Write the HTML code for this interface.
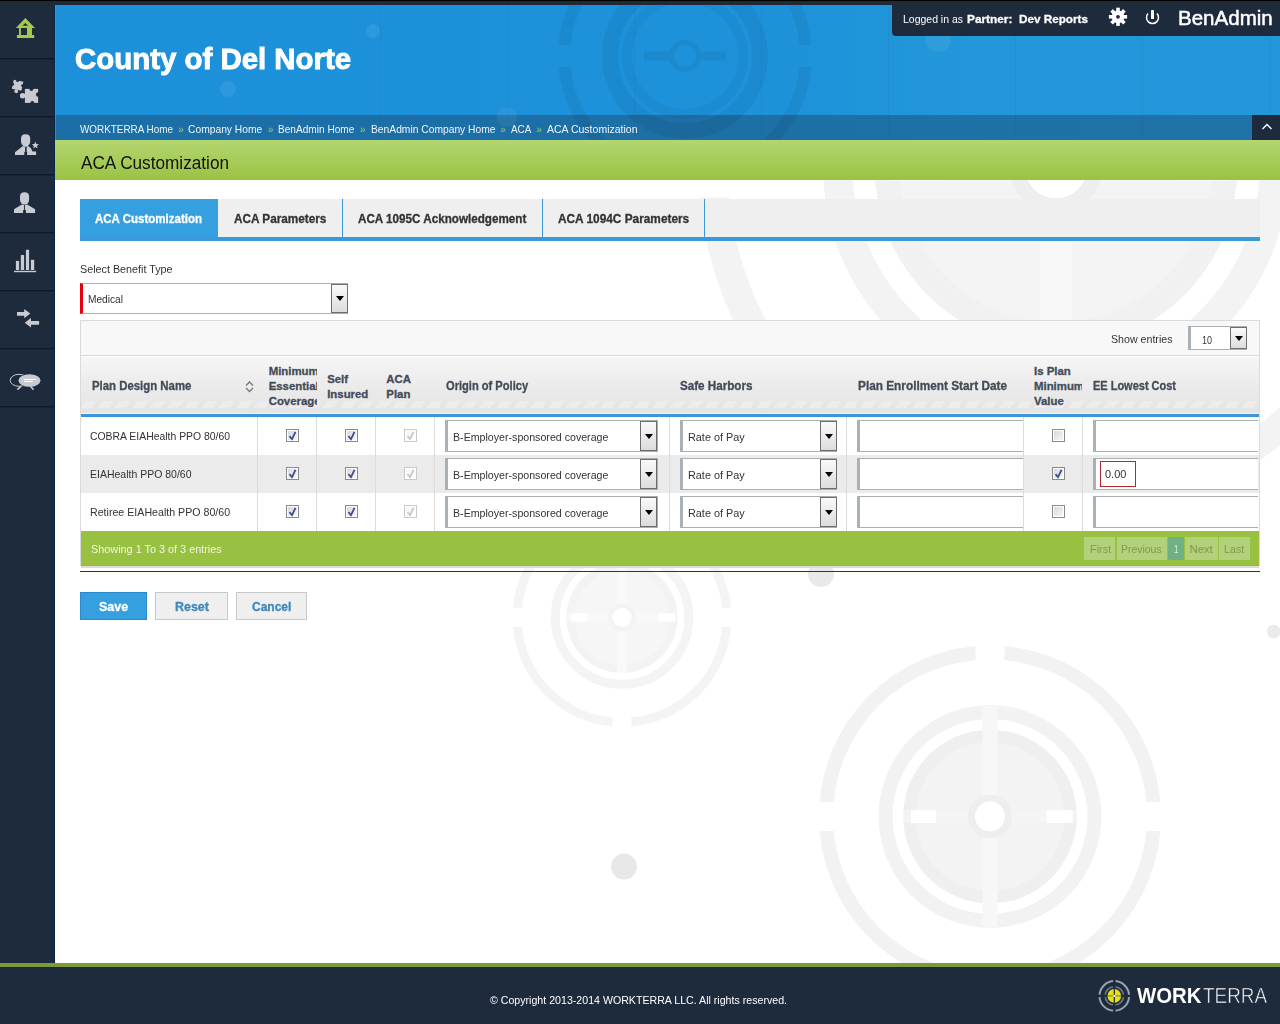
<!DOCTYPE html><html><head><meta charset="utf-8"><style>
*{margin:0;padding:0;box-sizing:border-box}
html,body{width:1280px;height:1024px;overflow:hidden;background:#fff;font-family:"Liberation Sans",sans-serif;color:#333;position:relative}
.a{position:absolute}
.t{position:absolute;white-space:pre;transform-origin:0 0}
</style></head><body><svg class="a" width="1280" height="1024" style="left:0;top:0"><defs><mask id="gapmask" maskUnits="userSpaceOnUse" x="-200" y="-200" width="400" height="400"><rect x="-200" y="-200" width="400" height="400" fill="#fff"/><rect x="-14.5" y="-200" width="29" height="400" fill="#000"/><rect x="-200" y="-14.5" width="400" height="29" fill="#000"/></mask></defs><g transform="translate(1056 167) scale(2.09)"><circle r="164" fill="none" stroke="#f3f3f3" stroke-width="14" mask="url(#gapmask)"/><circle r="104.4" fill="none" stroke="#f3f3f3" stroke-width="14"/><circle r="86.8" fill="#f1f1f1"/><circle r="74.5" fill="#f4f4f4"/><rect x="-7.5" y="-111.4" width="15" height="222.8" fill="#f8f8f8"/><rect x="-86.8" y="-6.5" width="173.6" height="13" fill="#f8f8f8" opacity="0.5"/><circle r="22" fill="#eeeeee"/><circle r="15" fill="#fff"/><rect x="-79" y="-6.5" width="25" height="13" fill="#fff"/><rect x="56.6" y="-6.5" width="26" height="13" fill="#fff"/></g><g transform="translate(622 617.5) scale(0.64)"><circle r="164" fill="none" stroke="#f4f4f4" stroke-width="14" mask="url(#gapmask)"/><circle r="104.4" fill="none" stroke="#f4f4f4" stroke-width="14"/><circle r="86.8" fill="#f3f3f3"/><circle r="74.5" fill="#f6f6f6"/><rect x="-7.5" y="-86.8" width="15" height="173.6" fill="#f9f9f9"/><rect x="-86.8" y="-6.5" width="173.6" height="13" fill="#f9f9f9" opacity="0.5"/><circle r="22" fill="#f3f3f3"/><circle r="15" fill="#fff"/><rect x="-79" y="-6.5" width="25" height="13" fill="#fff"/><rect x="56.6" y="-6.5" width="26" height="13" fill="#fff"/></g><g transform="translate(990 816.5) scale(1.0)"><circle r="164" fill="none" stroke="#f2f2f2" stroke-width="14" mask="url(#gapmask)"/><circle r="104.4" fill="none" stroke="#f2f2f2" stroke-width="14"/><circle r="86.8" fill="#efefef"/><circle r="74.5" fill="#f3f3f3"/><rect x="-7.5" y="-111.4" width="15" height="222.8" fill="#f7f7f7"/><rect x="-86.8" y="-6.5" width="173.6" height="13" fill="#f7f7f7" opacity="0.5"/><circle r="22" fill="#eeeeee"/><circle r="15" fill="#fff"/><rect x="-79" y="-6.5" width="25" height="13" fill="#fff"/><rect x="56.6" y="-6.5" width="26" height="13" fill="#fff"/></g><circle cx="821" cy="574" r="13" fill="#e9e9e9"/><circle cx="624" cy="866.6" r="13" fill="#e8e8e8"/><circle cx="1273.6" cy="631.6" r="6.8" fill="#ebebeb"/></svg><div class="a" style="left:0;top:0;width:1280px;height:5px;background:#1f2a37;border-top:1px solid #000"></div><div class="a" style="left:0;top:5px;width:55px;height:958px;background:#1e2b3d;border-right:1px solid #06284a"></div><div class="a" style="left:0;top:58px;width:54px;height:1px;background:#0d1a2a"></div><div class="a" style="left:0;top:59px;width:54px;height:1px;background:#16222f"></div><div class="a" style="left:0;top:116px;width:54px;height:1px;background:#0d1a2a"></div><div class="a" style="left:0;top:117px;width:54px;height:1px;background:#16222f"></div><div class="a" style="left:0;top:174px;width:54px;height:1px;background:#0d1a2a"></div><div class="a" style="left:0;top:175px;width:54px;height:1px;background:#16222f"></div><div class="a" style="left:0;top:232px;width:54px;height:1px;background:#0d1a2a"></div><div class="a" style="left:0;top:233px;width:54px;height:1px;background:#16222f"></div><div class="a" style="left:0;top:290px;width:54px;height:1px;background:#0d1a2a"></div><div class="a" style="left:0;top:291px;width:54px;height:1px;background:#16222f"></div><div class="a" style="left:0;top:348px;width:54px;height:1px;background:#0d1a2a"></div><div class="a" style="left:0;top:349px;width:54px;height:1px;background:#16222f"></div><div class="a" style="left:0;top:406px;width:54px;height:1px;background:#0d1a2a"></div><div class="a" style="left:0;top:407px;width:54px;height:1px;background:#16222f"></div><svg class="a" width="55" height="400" style="left:0;top:0"><path d="M15.9 27.9 L25.3 17.9 L35 27.9 Z M22.5 25.75 L25.3 22.9 L28.1 25.75 Z" fill="#a3ca4a" fill-rule="evenodd"/><rect x="19" y="27.9" width="1.9" height="7.2" fill="#a3ca4a"/><rect x="27" y="27.9" width="5" height="7.2" fill="#a3ca4a"/><rect x="16.9" y="35" width="17.3" height="3" fill="#a3ca4a"/><g fill="#c8ccd2"><rect x="24.9" y="88.9" width="13.2" height="14"/><circle cx="22.6" cy="95.7" r="2.7"/></g><g fill="#1e2b3d"><circle cx="31.4" cy="88.9" r="2"/><circle cx="38.1" cy="94.5" r="2.2"/><circle cx="32.3" cy="102.9" r="2"/></g><g transform="translate(17.6 85.2) rotate(-78) scale(0.7)"><g fill="#c8ccd2"><rect x="-6.6" y="-7" width="13.2" height="14"/><circle cx="-8.9" cy="-0.2" r="2.7"/></g><g fill="#1e2b3d"><circle cx="-0.1" cy="-7" r="2"/><circle cx="6.6" cy="-1.4" r="2.2"/><circle cx="0.8" cy="7" r="2"/></g></g><g fill="#c8ccd2"><path d="M21 138.5 Q21 134.2 25.6 134.2 Q30.2 134.2 30.2 138.5 L30.2 141.5 Q30.2 144.8 27.8 146 L23.4 146 Q21 144.8 21 141.5 Z"/><path d="M22.5 146.3 L28.6 146.3 L31 148.3 L32.5 151.5 L36.1 151.5 L36.1 155.1 L15 155.1 L15 152.3 Z"/><path d="M35.4 141.6 L36.4 144 L39 144.2 L37 145.9 L37.6 148.5 L35.4 147.1 L33.2 148.5 L33.8 145.9 L31.8 144.2 L34.4 144 Z"/></g><path d="M25.1 147 L26.7 147 L26.7 152 L27.1 152 L27.1 155.2 L24.3 155.2 L24.3 152 L25.1 152 Z" fill="#1e2b3d"/><g fill="#c8ccd2"><path d="M20 196.5 Q20 192.2 24.55 192.2 Q29.1 192.2 29.1 196.5 L29.1 199.5 Q29.1 202.8 27.2 204 L21.9 204 Q20 202.8 20 199.5 Z"/><path d="M21.9 204.6 L27.2 204.6 L35.1 209.3 L35.1 213.1 L14 213.1 L14 209.3 Z"/></g><path d="M24 205 L24.9 205 L24.9 210.1 L25.9 210.1 L25.9 213.2 L23.1 213.2 L23.1 210.1 L24 210.1 Z" fill="#1e2b3d"/><g fill="#c8ccd2"><rect x="15.9" y="260.9" width="3.2" height="9.1"/><rect x="20.8" y="255" width="3.3" height="15"/><rect x="25.9" y="249.8" width="3.2" height="20.2"/><rect x="30.9" y="259.8" width="3.3" height="10.2"/><rect x="14" y="270.8" width="22.1" height="1.4"/></g><g fill="#c8ccd2"><path d="M17 312 L24.2 312 L24.2 309 L30.3 313.6 L24.2 318.3 L24.2 315.8 L17 315.8 Z"/><path d="M39.1 320.9 L31 320.9 L31 317.9 L24.7 322.7 L31 327.4 L31 324.8 L39.1 324.8 Z"/></g><ellipse cx="19" cy="380.3" rx="8.8" ry="6" fill="none" stroke="#c8ccd2" stroke-width="1"/><path d="M21 386.4 L17.3 389.6" fill="none" stroke="#c8ccd2" stroke-width="1.6"/><ellipse cx="29.5" cy="380.5" rx="11.5" ry="6.5" fill="#1e2b3d"/><ellipse cx="29.5" cy="380.5" rx="11" ry="6.3" fill="#c8ccd2"/><path d="M30.3 386.3 L33.6 389.6" fill="none" stroke="#c8ccd2" stroke-width="1.6"/><rect x="24" y="379" width="11.8" height="1" fill="#fff"/><rect x="24" y="381" width="8.8" height="1" fill="#fff"/></svg><div class="a" style="left:55px;top:5px;width:1225px;height:110px;background:linear-gradient(90deg,#1c90d9 0%,#1d91d9 55%,#2397da 75%,#2397da 100%)"></div><div class="a" style="left:55px;top:115px;width:1225px;height:25px;background:linear-gradient(90deg,#1c6fa6 0%,#1d70a6 55%,#2073a8 100%)"></div><div class="a" style="left:55px;top:5px;width:1px;height:135px;background:#3f9fdc;opacity:.6"></div><div class="a" style="left:380px;top:5px;width:1px;height:135px;background:#000;opacity:.035"></div><div class="a" style="left:507px;top:5px;width:1px;height:135px;background:#000;opacity:.035"></div><div class="a" style="left:634px;top:5px;width:1px;height:135px;background:#000;opacity:.035"></div><div class="a" style="left:761px;top:5px;width:1px;height:135px;background:#000;opacity:.035"></div><div class="a" style="left:888px;top:5px;width:1px;height:135px;background:#000;opacity:.035"></div><div class="a" style="left:1015px;top:5px;width:1px;height:135px;background:#000;opacity:.035"></div><div class="a" style="left:1142px;top:5px;width:1px;height:135px;background:#000;opacity:.035"></div><div class="a" style="left:1269px;top:5px;width:1px;height:135px;background:#000;opacity:.035"></div><div class="a" style="left:55px;top:140px;width:1225px;height:40px;background:linear-gradient(#b3d670,#9bc243)"></div><svg class="a" width="1225" height="135" style="left:55px;top:5px"><g transform="translate(630 51)" fill="none" stroke="#000" stroke-opacity="0.055"><circle r="121" stroke-width="12" mask="url(#hgap)"/><circle r="75" stroke-width="16"/><circle r="58" stroke-width="10" stroke-opacity="0.03"/><circle r="13.5" stroke-width="5"/></g><g transform="translate(630 51)" fill="#000" fill-opacity="0.055"><rect x="-41" y="-4.5" width="25" height="9"/><rect x="16" y="-4.5" width="25" height="9"/></g><defs><mask id="hgap" maskUnits="userSpaceOnUse" x="-150" y="-150" width="300" height="300"><rect x="-150" y="-150" width="300" height="300" fill="#fff"/><rect x="-11" y="-150" width="22" height="300" fill="#000"/><rect x="-150" y="-11" width="300" height="22" fill="#000"/></mask></defs><circle cx="173" cy="84" r="8" fill="#fff" fill-opacity="0.08"/><circle cx="318" cy="26" r="7" fill="#fff" fill-opacity="0.08"/><circle cx="452" cy="112" r="10" fill="#fff" fill-opacity="0.06"/><circle cx="883" cy="34" r="13" fill="#fff" fill-opacity="0.06"/></svg><div class="t" style="left:75.40px;top:45.35px;font-size:29px;line-height:29px;color:#fff;font-weight:bold;transform:scaleX(1.0144);-webkit-text-stroke:0.9px #fff;">County of Del Norte</div><div class="a" style="left:892px;top:5px;width:388px;height:30.6px;background:#1e2b3d;border-bottom-left-radius:4px"></div><div class="t" style="left:903.30px;top:13.57px;font-size:11.8px;line-height:11.8px;color:#fff;transform:scaleX(0.8881);">Logged in as</div><div class="t" style="left:967.30px;top:13.57px;font-size:11.8px;line-height:11.8px;color:#fff;font-weight:bold;-webkit-text-stroke:0.3px #fff;transform:scaleX(1.0033);">Partner:</div><div class="t" style="left:1019.40px;top:13.57px;font-size:11.8px;line-height:11.8px;color:#fff;font-weight:bold;-webkit-text-stroke:0.3px #fff;transform:scaleX(0.9928);">Dev Reports</div><svg class="a" width="1280" height="40" style="left:0;top:0"><g transform="translate(1118 16.8)" fill="#fff"><rect x="-1.8" y="-9.1" width="3.6" height="5" transform="rotate(0)"/><rect x="-1.8" y="-9.1" width="3.6" height="5" transform="rotate(45)"/><rect x="-1.8" y="-9.1" width="3.6" height="5" transform="rotate(90)"/><rect x="-1.8" y="-9.1" width="3.6" height="5" transform="rotate(135)"/><rect x="-1.8" y="-9.1" width="3.6" height="5" transform="rotate(180)"/><rect x="-1.8" y="-9.1" width="3.6" height="5" transform="rotate(225)"/><rect x="-1.8" y="-9.1" width="3.6" height="5" transform="rotate(270)"/><rect x="-1.8" y="-9.1" width="3.6" height="5" transform="rotate(315)"/><circle r="6.4"/></g><circle cx="1118" cy="16.8" r="1.9" fill="#1e2b3d"/><path d="M1148 13.6 A6 6 0 1 0 1157 13.6" fill="none" stroke="#fff" stroke-width="1.5"/><rect x="1151" y="10" width="3" height="9" rx="0.8" fill="#fff"/></svg><div class="t" style="left:1177.60px;top:7.15px;font-size:21px;line-height:21px;color:#fff;transform:scaleX(0.9774);-webkit-text-stroke:0.5px #fff;">BenAdmin</div><div class="t" style="left:80.00px;top:123.99px;font-size:11.3px;line-height:11.3px;color:#eef5fb;transform:scaleX(0.8766);">WORKTERRA Home</div><div class="t" style="left:177.90px;top:124.80px;font-size:10px;line-height:10px;color:#93cc5a;">»</div><div class="t" style="left:188.40px;top:123.99px;font-size:11.3px;line-height:11.3px;color:#eef5fb;transform:scaleX(0.9103);">Company Home</div><div class="t" style="left:267.75px;top:124.80px;font-size:10px;line-height:10px;color:#93cc5a;">»</div><div class="t" style="left:278.40px;top:123.99px;font-size:11.3px;line-height:11.3px;color:#eef5fb;transform:scaleX(0.8945);">BenAdmin Home</div><div class="t" style="left:359.85px;top:124.80px;font-size:10px;line-height:10px;color:#93cc5a;">»</div><div class="t" style="left:370.50px;top:123.99px;font-size:11.3px;line-height:11.3px;color:#eef5fb;transform:scaleX(0.9095);">BenAdmin Company Home</div><div class="t" style="left:500.07px;top:124.80px;font-size:10px;line-height:10px;color:#93cc5a;">»</div><div class="t" style="left:510.75px;top:123.99px;font-size:11.3px;line-height:11.3px;color:#eef5fb;transform:scaleX(0.8716);">ACA</div><div class="t" style="left:536.20px;top:124.80px;font-size:10px;line-height:10px;color:#93cc5a;">»</div><div class="t" style="left:547.00px;top:123.99px;font-size:11.3px;line-height:11.3px;color:#eef5fb;transform:scaleX(0.9298);">ACA Customization</div><div class="a" style="left:1252px;top:115px;width:28px;height:25px;background:#1e2b3d"></div><svg class="a" width="28" height="25" style="left:1252px;top:115px"><path d="M10.5 14 L15 9.6 L19.5 14" fill="none" stroke="#fff" stroke-width="1.4"/></svg><div class="t" style="left:80.60px;top:154.53px;font-size:17.5px;line-height:17.5px;color:#111;transform:scaleX(0.9817);">ACA Customization</div><div class="a" style="left:80px;top:199px;width:1180px;height:38px;background:#efefef"></div><div class="a" style="left:80px;top:199px;width:138px;height:38px;background:#359fe0"></div><div class="a" style="left:342px;top:199px;width:1px;height:38px;background:#3b9ad6"></div><div class="a" style="left:542px;top:199px;width:1px;height:38px;background:#3b9ad6"></div><div class="a" style="left:704px;top:199px;width:1px;height:38px;background:#3b9ad6"></div><div class="a" style="left:80px;top:237px;width:1180px;height:4px;background:#3b9ad6"></div><div class="t" style="left:95.00px;top:212.80px;font-size:12px;line-height:12px;color:#fff;font-weight:bold;-webkit-text-stroke:0.3px #fff;transform:scaleX(0.9591);">ACA Customization</div><div class="t" style="left:234.40px;top:212.80px;font-size:12px;line-height:12px;color:#333;font-weight:bold;-webkit-text-stroke:0.3px #333;transform:scaleX(0.9802);">ACA Parameters</div><div class="t" style="left:358.30px;top:212.80px;font-size:12px;line-height:12px;color:#333;font-weight:bold;-webkit-text-stroke:0.3px #333;transform:scaleX(0.9720);">ACA 1095C Acknowledgement</div><div class="t" style="left:557.80px;top:212.80px;font-size:12px;line-height:12px;color:#333;font-weight:bold;-webkit-text-stroke:0.3px #333;transform:scaleX(0.9867);">ACA 1094C Parameters</div><div class="t" style="left:79.50px;top:263.06px;font-size:11.7px;line-height:11.7px;color:#333;transform:scaleX(0.9204);">Select Benefit Type</div><div class="a" style="left:80px;top:283px;width:268px;height:31px;background:#fff;border:1px solid #a8b0b5;border-left:3px solid #e4000f"></div><div class="a" style="left:331px;top:284px;width:17px;height:29px;border:1px solid #6d6d6d;background:linear-gradient(#fafafa,#dcdcdc)"><div class="a" style="left:3.5px;top:11.0px;width:0;height:0;border-left:4px solid transparent;border-right:4px solid transparent;border-top:5px solid #000"></div></div><div class="t" style="left:87.70px;top:293.93px;font-size:11.5px;line-height:11.5px;color:#333;transform:scaleX(0.8829);">Medical</div><div class="a" style="left:80px;top:320px;width:1180px;height:246px;border:1px solid #dadada;background:#fff"></div><div class="a" style="left:81px;top:321px;width:1178px;height:35px;background:#f8f8f8;border-bottom:1px solid #d6d6d6"></div><div class="t" style="left:1110.60px;top:333.69px;font-size:11.3px;line-height:11.3px;color:#333;transform:scaleX(0.9416);">Show entries</div><div class="a" style="left:1188px;top:326px;width:59px;height:24px;background:#fff;border:1px solid #a8b0b5;border-left:3px solid #a8b1b8"></div><div class="a" style="left:1230px;top:327px;width:17px;height:22px;border:1px solid #6d6d6d;background:linear-gradient(#fafafa,#dcdcdc)"><div class="a" style="left:3.5px;top:7.5px;width:0;height:0;border-left:4px solid transparent;border-right:4px solid transparent;border-top:5px solid #000"></div></div><div class="t" style="left:1202.00px;top:334.85px;font-size:11px;line-height:11px;color:#333;transform:scaleX(0.8163);">10</div><div class="a" style="left:81px;top:357px;width:1178px;height:57px;background:linear-gradient(#f6f6f6 0%,#ececec 45%,#e4e4e4 100%)"></div><div class="a" style="left:81px;top:401px;width:1178px;height:7px;opacity:.6;filter:blur(0.4px);background:repeating-linear-gradient(-55deg,transparent 0 5px,#f2f2f2 5px 14.2px)"></div><div class="a" style="left:81px;top:413px;width:1178px;height:1px;background:#eef6fc"></div><div class="a" style="left:81px;top:414px;width:1178px;height:3px;background:#3b95d6"></div><div class="t" style="left:91.50px;top:379.80px;font-size:12px;line-height:12px;color:#434b58;font-weight:bold;-webkit-text-stroke:0.3px #434b58;transform:scaleX(0.9494);">Plan Design Name</div><svg class="a" width="10" height="12" style="left:245px;top:380.7px"><path d="M1 4.5 L4.5 1 L8 4.5 M1 7 L4.5 10.5 L8 7" fill="none" stroke="#777" stroke-width="1.3"/></svg><div class="t" style="left:268.70px;top:365.91px;font-size:11.399999999999999px;line-height:11.399999999999999px;color:#434b58;font-weight:bold;-webkit-text-stroke:0.3px #434b58;"><div style="width:48.5px;overflow:hidden">Minimum</div></div><div class="t" style="left:268.70px;top:380.61px;font-size:11.399999999999999px;line-height:11.399999999999999px;color:#434b58;font-weight:bold;-webkit-text-stroke:0.3px #434b58;"><div style="width:48.5px;overflow:hidden">Essential</div></div><div class="t" style="left:268.70px;top:395.81px;font-size:11.399999999999999px;line-height:11.399999999999999px;color:#434b58;font-weight:bold;-webkit-text-stroke:0.3px #434b58;"><div style="width:48.5px;overflow:hidden">Coverage</div></div><div class="t" style="left:327.20px;top:373.61px;font-size:11.399999999999999px;line-height:11.399999999999999px;color:#434b58;font-weight:bold;-webkit-text-stroke:0.3px #434b58;">Self</div><div class="t" style="left:327.20px;top:388.81px;font-size:11.399999999999999px;line-height:11.399999999999999px;color:#434b58;font-weight:bold;-webkit-text-stroke:0.3px #434b58;">Insured</div><div class="t" style="left:386.30px;top:373.61px;font-size:11.399999999999999px;line-height:11.399999999999999px;color:#434b58;font-weight:bold;-webkit-text-stroke:0.3px #434b58;">ACA</div><div class="t" style="left:386.30px;top:388.81px;font-size:11.399999999999999px;line-height:11.399999999999999px;color:#434b58;font-weight:bold;-webkit-text-stroke:0.3px #434b58;">Plan</div><div class="t" style="left:445.50px;top:379.50px;font-size:12px;line-height:12px;color:#434b58;font-weight:bold;-webkit-text-stroke:0.3px #434b58;transform:scaleX(0.9257);">Origin of Policy</div><div class="t" style="left:680.30px;top:379.50px;font-size:12px;line-height:12px;color:#434b58;font-weight:bold;-webkit-text-stroke:0.3px #434b58;transform:scaleX(0.9705);">Safe Harbors</div><div class="t" style="left:857.50px;top:379.80px;font-size:12px;line-height:12px;color:#434b58;font-weight:bold;-webkit-text-stroke:0.3px #434b58;transform:scaleX(0.9843);">Plan Enrollment Start Date</div><div class="t" style="left:1034.00px;top:366.11px;font-size:11.399999999999999px;line-height:11.399999999999999px;color:#434b58;font-weight:bold;-webkit-text-stroke:0.3px #434b58;"><div style="width:48.0px;overflow:hidden">Is Plan</div></div><div class="t" style="left:1034.00px;top:381.11px;font-size:11.399999999999999px;line-height:11.399999999999999px;color:#434b58;font-weight:bold;-webkit-text-stroke:0.3px #434b58;"><div style="width:48.0px;overflow:hidden">Minimum</div></div><div class="t" style="left:1034.00px;top:396.11px;font-size:11.399999999999999px;line-height:11.399999999999999px;color:#434b58;font-weight:bold;-webkit-text-stroke:0.3px #434b58;"><div style="width:48.0px;overflow:hidden">Value</div></div><div class="t" style="left:1093.00px;top:379.80px;font-size:12px;line-height:12px;color:#434b58;font-weight:bold;-webkit-text-stroke:0.3px #434b58;transform:scaleX(0.9152);">EE Lowest Cost</div><div class="a" style="left:81px;top:455px;width:1178px;height:38px;background:#ebebeb"></div><div class="a" style="left:257px;top:417px;width:1px;height:114px;background:#dcdcdc"></div><div class="a" style="left:316px;top:417px;width:1px;height:114px;background:#dcdcdc"></div><div class="a" style="left:375px;top:417px;width:1px;height:114px;background:#dcdcdc"></div><div class="a" style="left:434px;top:417px;width:1px;height:114px;background:#dcdcdc"></div><div class="a" style="left:669px;top:417px;width:1px;height:114px;background:#dcdcdc"></div><div class="a" style="left:846px;top:417px;width:1px;height:114px;background:#dcdcdc"></div><div class="a" style="left:1023px;top:417px;width:1px;height:114px;background:#dcdcdc"></div><div class="a" style="left:1082px;top:417px;width:1px;height:114px;background:#dcdcdc"></div><div class="t" style="left:90.20px;top:431.00px;font-size:11.3px;line-height:11.3px;color:#333;transform:scaleX(0.9219);">COBRA EIAHealth PPO 80/60</div><div class="a" style="left:286px;top:429px;width:13px;height:13px;border:1px solid #8a8a8a;background:linear-gradient(135deg,#d4d6dc,#fafafa);box-shadow:inset 0 0 0 1px #fff"></div><svg class="a" width="13" height="13" style="left:286px;top:429px"><path d="M3.5 7.2 L6 10.1 L9.5 2.8" fill="none" stroke="#3f4d8c" stroke-width="1.8"/></svg><div class="a" style="left:345px;top:429px;width:13px;height:13px;border:1px solid #8a8a8a;background:linear-gradient(135deg,#d4d6dc,#fafafa);box-shadow:inset 0 0 0 1px #fff"></div><svg class="a" width="13" height="13" style="left:345px;top:429px"><path d="M3.5 7.2 L6 10.1 L9.5 2.8" fill="none" stroke="#3f4d8c" stroke-width="1.8"/></svg><div class="a" style="left:404px;top:429px;width:13px;height:13px;border:1px solid #c9c9c9;background:linear-gradient(135deg,#f4f4f4,#ffffff);box-shadow:inset 0 0 0 1px #fff"></div><svg class="a" width="13" height="13" style="left:404px;top:429px"><path d="M3.5 7.2 L6 10.1 L9.5 2.8" fill="none" stroke="#c8c8c8" stroke-width="1.8"/></svg><div class="a" style="left:445px;top:420px;width:213px;height:32px;background:#fff;border:1px solid #a8b0b5;border-left:3px solid #a8b1b8"></div><div class="a" style="left:640px;top:421px;width:17px;height:30px;border:1px solid #6d6d6d;background:linear-gradient(#fafafa,#dcdcdc)"><div class="a" style="left:3.5px;top:11.5px;width:0;height:0;border-left:4px solid transparent;border-right:4px solid transparent;border-top:5px solid #000"></div></div><div class="t" style="left:452.50px;top:431.65px;font-size:11px;line-height:11px;color:#333;transform:scaleX(0.9663);">B-Employer-sponsored coverage</div><div class="a" style="left:680px;top:420px;width:157px;height:32px;background:#fff;border:1px solid #a8b0b5;border-left:3px solid #a8b1b8"></div><div class="a" style="left:820px;top:421px;width:17px;height:30px;border:1px solid #6d6d6d;background:linear-gradient(#fafafa,#dcdcdc)"><div class="a" style="left:3.5px;top:11.5px;width:0;height:0;border-left:4px solid transparent;border-right:4px solid transparent;border-top:5px solid #000"></div></div><div class="t" style="left:687.50px;top:431.65px;font-size:11px;line-height:11px;color:#333;transform:scaleX(0.9864);">Rate of Pay</div><div class="a" style="left:857px;top:420px;width:166px;height:32px;background:#fff;border:1px solid #a8b0b5;border-right:none;border-left:3px solid #a8b1b8"></div><div class="a" style="left:1052px;top:429px;width:13px;height:13px;border:1px solid #8a8a8a;background:linear-gradient(135deg,#d4d6dc,#fafafa);box-shadow:inset 0 0 0 1px #fff"></div><div class="a" style="left:1093px;top:420px;width:165px;height:32px;background:#fff;border:1px solid #a8b0b5;border-right:none;border-left:3px solid #a8b1b8"></div><div class="t" style="left:90.20px;top:469.00px;font-size:11.3px;line-height:11.3px;color:#333;transform:scaleX(0.9288);">EIAHealth PPO 80/60</div><div class="a" style="left:286px;top:467px;width:13px;height:13px;border:1px solid #8a8a8a;background:linear-gradient(135deg,#d4d6dc,#fafafa);box-shadow:inset 0 0 0 1px #fff"></div><svg class="a" width="13" height="13" style="left:286px;top:467px"><path d="M3.5 7.2 L6 10.1 L9.5 2.8" fill="none" stroke="#3f4d8c" stroke-width="1.8"/></svg><div class="a" style="left:345px;top:467px;width:13px;height:13px;border:1px solid #8a8a8a;background:linear-gradient(135deg,#d4d6dc,#fafafa);box-shadow:inset 0 0 0 1px #fff"></div><svg class="a" width="13" height="13" style="left:345px;top:467px"><path d="M3.5 7.2 L6 10.1 L9.5 2.8" fill="none" stroke="#3f4d8c" stroke-width="1.8"/></svg><div class="a" style="left:404px;top:467px;width:13px;height:13px;border:1px solid #c9c9c9;background:linear-gradient(135deg,#f4f4f4,#ffffff);box-shadow:inset 0 0 0 1px #fff"></div><svg class="a" width="13" height="13" style="left:404px;top:467px"><path d="M3.5 7.2 L6 10.1 L9.5 2.8" fill="none" stroke="#c8c8c8" stroke-width="1.8"/></svg><div class="a" style="left:445px;top:458px;width:213px;height:32px;background:#fff;border:1px solid #a8b0b5;border-left:3px solid #a8b1b8"></div><div class="a" style="left:640px;top:459px;width:17px;height:30px;border:1px solid #6d6d6d;background:linear-gradient(#fafafa,#dcdcdc)"><div class="a" style="left:3.5px;top:11.5px;width:0;height:0;border-left:4px solid transparent;border-right:4px solid transparent;border-top:5px solid #000"></div></div><div class="t" style="left:452.50px;top:469.65px;font-size:11px;line-height:11px;color:#333;transform:scaleX(0.9663);">B-Employer-sponsored coverage</div><div class="a" style="left:680px;top:458px;width:157px;height:32px;background:#fff;border:1px solid #a8b0b5;border-left:3px solid #a8b1b8"></div><div class="a" style="left:820px;top:459px;width:17px;height:30px;border:1px solid #6d6d6d;background:linear-gradient(#fafafa,#dcdcdc)"><div class="a" style="left:3.5px;top:11.5px;width:0;height:0;border-left:4px solid transparent;border-right:4px solid transparent;border-top:5px solid #000"></div></div><div class="t" style="left:687.50px;top:469.65px;font-size:11px;line-height:11px;color:#333;transform:scaleX(0.9864);">Rate of Pay</div><div class="a" style="left:857px;top:458px;width:166px;height:32px;background:#fff;border:1px solid #a8b0b5;border-right:none;border-left:3px solid #a8b1b8"></div><div class="a" style="left:1052px;top:467px;width:13px;height:13px;border:1px solid #8a8a8a;background:linear-gradient(135deg,#d4d6dc,#fafafa);box-shadow:inset 0 0 0 1px #fff"></div><svg class="a" width="13" height="13" style="left:1052px;top:467px"><path d="M3.5 7.2 L6 10.1 L9.5 2.8" fill="none" stroke="#3f4d8c" stroke-width="1.8"/></svg><div class="a" style="left:1093px;top:458px;width:165px;height:32px;background:#fff;border:1px solid #a8b0b5;border-right:none;border-left:3px solid #a8b1b8"></div><div class="t" style="left:90.20px;top:507.00px;font-size:11.3px;line-height:11.3px;color:#333;transform:scaleX(0.9414);">Retiree EIAHealth PPO 80/60</div><div class="a" style="left:286px;top:505px;width:13px;height:13px;border:1px solid #8a8a8a;background:linear-gradient(135deg,#d4d6dc,#fafafa);box-shadow:inset 0 0 0 1px #fff"></div><svg class="a" width="13" height="13" style="left:286px;top:505px"><path d="M3.5 7.2 L6 10.1 L9.5 2.8" fill="none" stroke="#3f4d8c" stroke-width="1.8"/></svg><div class="a" style="left:345px;top:505px;width:13px;height:13px;border:1px solid #8a8a8a;background:linear-gradient(135deg,#d4d6dc,#fafafa);box-shadow:inset 0 0 0 1px #fff"></div><svg class="a" width="13" height="13" style="left:345px;top:505px"><path d="M3.5 7.2 L6 10.1 L9.5 2.8" fill="none" stroke="#3f4d8c" stroke-width="1.8"/></svg><div class="a" style="left:404px;top:505px;width:13px;height:13px;border:1px solid #c9c9c9;background:linear-gradient(135deg,#f4f4f4,#ffffff);box-shadow:inset 0 0 0 1px #fff"></div><svg class="a" width="13" height="13" style="left:404px;top:505px"><path d="M3.5 7.2 L6 10.1 L9.5 2.8" fill="none" stroke="#c8c8c8" stroke-width="1.8"/></svg><div class="a" style="left:445px;top:496px;width:213px;height:32px;background:#fff;border:1px solid #a8b0b5;border-left:3px solid #a8b1b8"></div><div class="a" style="left:640px;top:497px;width:17px;height:30px;border:1px solid #6d6d6d;background:linear-gradient(#fafafa,#dcdcdc)"><div class="a" style="left:3.5px;top:11.5px;width:0;height:0;border-left:4px solid transparent;border-right:4px solid transparent;border-top:5px solid #000"></div></div><div class="t" style="left:452.50px;top:507.65px;font-size:11px;line-height:11px;color:#333;transform:scaleX(0.9663);">B-Employer-sponsored coverage</div><div class="a" style="left:680px;top:496px;width:157px;height:32px;background:#fff;border:1px solid #a8b0b5;border-left:3px solid #a8b1b8"></div><div class="a" style="left:820px;top:497px;width:17px;height:30px;border:1px solid #6d6d6d;background:linear-gradient(#fafafa,#dcdcdc)"><div class="a" style="left:3.5px;top:11.5px;width:0;height:0;border-left:4px solid transparent;border-right:4px solid transparent;border-top:5px solid #000"></div></div><div class="t" style="left:687.50px;top:507.65px;font-size:11px;line-height:11px;color:#333;transform:scaleX(0.9864);">Rate of Pay</div><div class="a" style="left:857px;top:496px;width:166px;height:32px;background:#fff;border:1px solid #a8b0b5;border-right:none;border-left:3px solid #a8b1b8"></div><div class="a" style="left:1052px;top:505px;width:13px;height:13px;border:1px solid #8a8a8a;background:linear-gradient(135deg,#d4d6dc,#fafafa);box-shadow:inset 0 0 0 1px #fff"></div><div class="a" style="left:1093px;top:496px;width:165px;height:32px;background:#fff;border:1px solid #a8b0b5;border-right:none;border-left:3px solid #a8b1b8"></div><div class="a" style="left:1100px;top:461px;width:36px;height:26px;border:1px solid #b5262e;background:#fff"></div><div class="t" style="left:1104.60px;top:468.79px;font-size:11.3px;line-height:11.3px;color:#333;transform:scaleX(0.9727);">0.00</div><div class="a" style="left:81px;top:531px;width:1178px;height:35px;background:#98c041"></div><div class="t" style="left:90.50px;top:543.89px;font-size:11.3px;line-height:11.3px;color:#f2f7e0;transform:scaleX(0.9605);">Showing 1 To 3 of 3 entries</div><div class="a" style="left:1084px;top:537px;width:31px;height:23px;background:#b3d07a"></div><div class="t" style="left:1089.50px;top:543.69px;font-size:11.3px;line-height:11.3px;color:#7f9b4f;transform:scaleX(0.9650);">First</div><div class="a" style="left:1116.5px;top:537px;width:50.09999999999991px;height:23px;background:#b3d07a"></div><div class="t" style="left:1120.70px;top:543.69px;font-size:11.3px;line-height:11.3px;color:#7f9b4f;transform:scaleX(0.9237);">Previous</div><div class="a" style="left:1167.5px;top:537px;width:16.5px;height:23px;background:#6fb184"></div><div class="t" style="left:1174.30px;top:543.69px;font-size:11.3px;line-height:11.3px;color:#d9efd9;transform:scaleX(0.7146);">1</div><div class="a" style="left:1184.6px;top:537px;width:33.200000000000045px;height:23px;background:#b3d07a"></div><div class="t" style="left:1189.50px;top:543.69px;font-size:11.3px;line-height:11.3px;color:#7f9b4f;">Next</div><div class="a" style="left:1219px;top:537px;width:30.59999999999991px;height:23px;background:#b3d07a"></div><div class="t" style="left:1223.60px;top:543.69px;font-size:11.3px;line-height:11.3px;color:#7f9b4f;transform:scaleX(0.9457);">Last</div><div class="a" style="left:81px;top:565px;width:1178px;height:1px;background:#97b944"></div><div class="a" style="left:81px;top:566px;width:1178px;height:2px;background:#dcdcdc"></div><div class="a" style="left:80px;top:571px;width:1180px;height:1px;background:#333"></div><div class="a" style="left:80px;top:592px;width:67px;height:28px;background:#359fe0;border:1px solid #2b8bc9"></div><div class="t" style="left:99.30px;top:601.08px;font-size:12.5px;line-height:12.5px;color:#fff;font-weight:bold;-webkit-text-stroke:0.3px #fff;transform:scaleX(0.9965);">Save</div><div class="a" style="left:155px;top:592px;width:73px;height:28px;background:#efefef;border:1px solid #c9c9c9"></div><div class="t" style="left:174.70px;top:601.08px;font-size:12.5px;line-height:12.5px;color:#3f87b9;font-weight:bold;-webkit-text-stroke:0.3px #3f87b9;transform:scaleX(0.9957);">Reset</div><div class="a" style="left:236px;top:592px;width:71px;height:28px;background:#efefef;border:1px solid #c9c9c9"></div><div class="t" style="left:252.10px;top:601.08px;font-size:12.5px;line-height:12.5px;color:#3f87b9;font-weight:bold;-webkit-text-stroke:0.3px #3f87b9;transform:scaleX(0.9610);">Cancel</div><div class="a" style="left:0;top:963px;width:1280px;height:4px;background:#7b9a3b"></div><div class="a" style="left:0;top:967px;width:1280px;height:57px;background:#1e2b3d"></div><div class="a" style="left:0;top:967px;width:1280px;height:1px;background:#1a2d1e"></div><div class="t" style="left:490.00px;top:995.23px;font-size:11.5px;line-height:11.5px;color:#fff;transform:scaleX(0.9233);">© Copyright 2013-2014 WORKTERRA LLC. All rights reserved.</div><svg class="a" width="40" height="40" style="left:1094px;top:976px"><g transform="translate(20.3 19.9)"><circle r="14.8" fill="none" stroke="#9aa3ad" stroke-width="2" mask="url(#lgap)"/><circle r="9.2" fill="none" stroke="#737c87" stroke-width="1.5" mask="url(#lgap)"/><circle r="6.8" fill="#e6df1f"/><rect x="-0.6" y="-6.8" width="1.2" height="13.6" fill="#222"/><rect x="-6.8" y="-0.5" width="13.6" height="1" fill="#7a7a20"/><circle r="1.1" fill="#fff"/></g><defs><mask id="lgap" maskUnits="userSpaceOnUse" x="-20" y="-20" width="40" height="40"><rect x="-20" y="-20" width="40" height="40" fill="#fff"/><rect x="-1.2" y="-20" width="2.4" height="40" fill="#000"/><rect x="-20" y="-1.2" width="40" height="2.4" fill="#000"/></mask></defs></svg><div class="t" style="left:1136.80px;top:986.11px;font-size:21.4px;line-height:21.4px;color:#fff;font-weight:bold;transform:scaleX(0.9522);">WORK</div><div class="t" style="left:1203.00px;top:986.11px;font-size:21.4px;line-height:21.4px;color:#fff;transform:scaleX(0.8828);-webkit-text-stroke:0.6px #1e2b3d;">TERRA</div></body></html>
